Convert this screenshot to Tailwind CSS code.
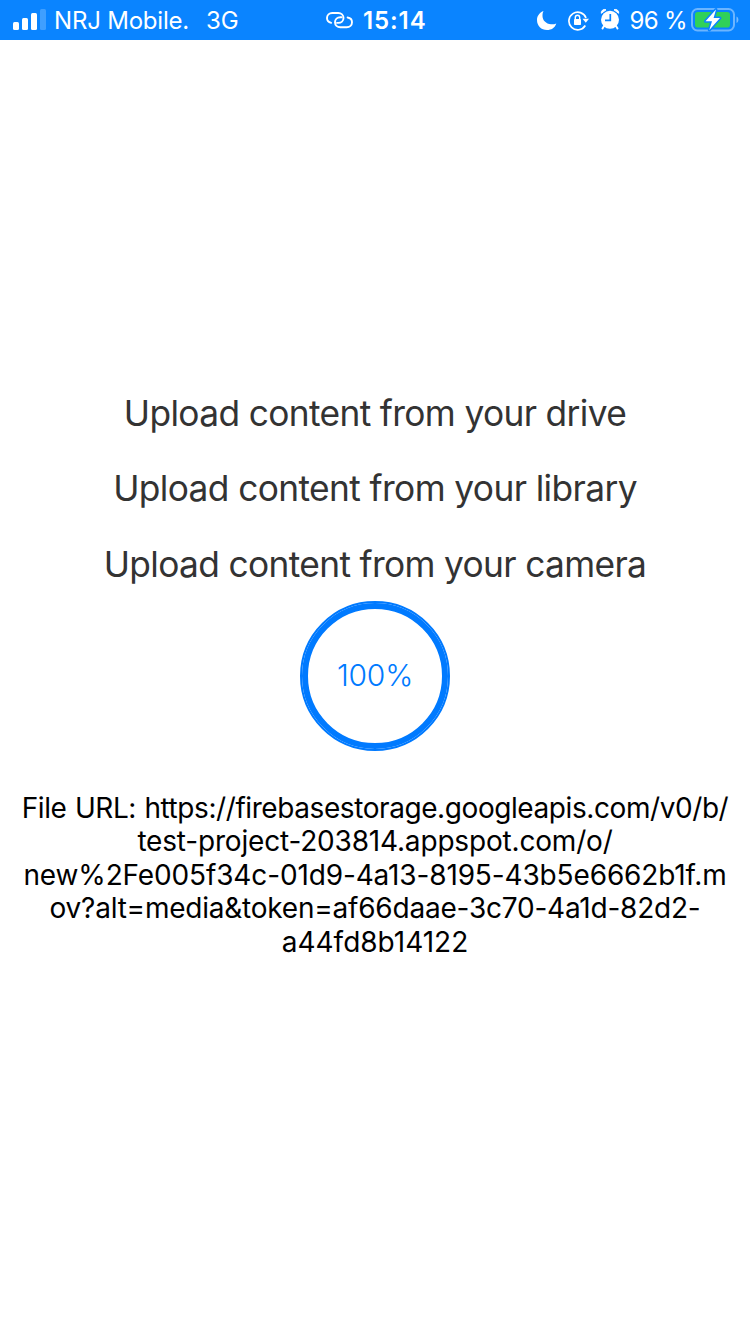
<!DOCTYPE html>
<html lang="en">
<head>
<meta charset="utf-8">
<title>Upload</title>
<script src="https://cdn.jsdelivr.net/npm/@tailwindcss/browser@4"></script>
</head>
<body class="w-[750px] h-[1334px] overflow-hidden bg-white font-['Inter','Liberation_Sans',sans-serif] flex flex-col">
<header class="h-10 shrink-0 bg-[#0a84ff] text-white text-[24px] leading-[42px] flex whitespace-nowrap">
  <div class="w-[326px] pl-[13px] flex">
    <svg class="w-[34px] h-10 shrink-0" viewBox="0 0 34 40" fill="#fff"><rect x="0" y="22" width="6" height="8" rx="1.5"/><rect x="9" y="18" width="6" height="12" rx="1.5"/><rect x="18" y="13" width="6" height="17" rx="1.5"/><rect x="27" y="9" width="6" height="21" rx="1.5" opacity=".22"/></svg>
    <span class="w-[152px] pl-[7px] tracking-[-0.2px]">NRJ Mobile.</span>
    <span class="pl-[7px]">3G</span>
  </div>
  <div class="w-[211px] flex">
    <svg class="w-[28px] h-10 shrink-0" viewBox="0 0 28 40" fill="none" stroke="#fff" stroke-width="1.9" stroke-linecap="round"><path d="M5.200 22.800C2.700 22.200 1 20.300 1 18C1 15.200 3.300 13 6.200 13H12.300C15.200 13 17.500 15.200 17.500 18C17.500 20.800 15.200 22.900 12.300 22.900H11"/><path d="M21.600 17.500C24.300 17.900 26 19.900 26 22.200C26 25 23.700 27.200 20.800 27.200H14.200C11.300 27.200 9 25 9 22.200C9 19.400 11.300 17.300 14.200 17.300H15.500"/></svg>
    <span class="pl-[9px] font-semibold tracking-[0.9px]">15:14</span>
  </div>
  <div class="flex">
    <svg class="w-[20px] h-10 shrink-0" viewBox="0 0 20 40" fill="#fff"><path d="M6.500 11C1.500 13 0 17 0 20C0 26 4.300 30 10 30C14.300 30 17.800 28 19.300 23.500C17.500 24.200 16 24.500 14 24.300C9 23.800 5.500 20.300 5.500 16C5.500 14 5.700 12.500 6.500 11Z"/></svg>
    <svg class="ml-[11px] w-[21px] h-10 shrink-0" viewBox="0 0 21 40" fill="none" stroke="#fff" stroke-width="1.700"><path d="M17.300 25.500A8.800 8.800 0 1 1 18 18"/><path d="M14.500 18.700H21L17.800 22.700Z" fill="#fff" stroke="none"/><rect x="6" y="19" width="7" height="6" rx=".8" fill="#fff" stroke="none"/><path d="M7.300 19.500V17.500A2.200 2.200 0 0 1 11.700 17.500V19.500" stroke-width="1.400"/></svg>
    <svg class="ml-[11px] w-[21px] h-10 shrink-0" viewBox="0 0 21 40"><circle cx="10" cy="19.800" r="9" fill="#fff"/><path d="M1.300 13.300A3.300 3.300 0 0 1 6 9.800ZM18.700 13.300A3.300 3.300 0 0 0 14 9.800Z" fill="#fff" stroke="#fff" stroke-width="1"/><path d="M4 26L2.500 28.500M16 26L17.500 28.500" stroke="#fff" stroke-width="2" stroke-linecap="round"/><path d="M10.300 14V20.400H5" fill="none" stroke="#0a84ff" stroke-width="1.700"/></svg>
    <span class="w-[70px] pl-[8.5px] tracking-[-0.7px]">96 %</span>
    <svg class="w-[49px] h-10 shrink-0" viewBox="0 0 49 40"><rect x="1" y="9" width="42" height="21.500" rx="5.500" fill="none" stroke="#fff" stroke-opacity=".4" stroke-width="2"/><path d="M45.500 16.500C48 17.500 48 22 45.500 23Z" fill="#fff" opacity=".45"/><rect x="4" y="12" width="35" height="15.500" rx="2.800" fill="#30d158"/><path d="M25 9.500L14.500 21.300H21L18.300 30L29 18H22.600Z" fill="#fff" stroke="#0a84ff" stroke-width="3" paint-order="stroke" stroke-linejoin="round"/></svg>
  </div>
</header>
<main class="pt-[336px] flex flex-col items-center">
  <button class="h-[75px] text-[35.3px] leading-[76px] tracking-[-0.64px] text-[#333] whitespace-nowrap">Upload content from your drive</button>
  <button class="h-[75px] text-[35.3px] leading-[76px] tracking-[-0.61px] text-[#333] whitespace-nowrap">Upload content from your library</button>
  <button class="h-[75px] text-[35.3px] leading-[78px] tracking-[-0.65px] text-[#333] whitespace-nowrap">Upload content from your camera</button>
  <div class="w-[150px] h-[150px] grid">
    <svg class="col-start-1 row-start-1 w-[150px] h-[150px]" viewBox="0 0 150 150" fill="none" stroke="#007aff"><circle cx="75" cy="75" r="74" stroke-width="2"/><circle cx="75" cy="75" r="70" stroke-width="6"/></svg>
    <span class="col-start-1 row-start-1 text-center text-[30px] leading-[149px] tracking-[-0.2px] font-light text-[#007aff]">100%</span>
  </div>
  <p class="pt-[41px] text-[28px] leading-[33.4px] text-black text-center whitespace-nowrap"><span class="tracking-[-0.42px] [word-spacing:1px]">File URL: https://firebasestorage.googleapis.com/v0/b/</span><br><span class="tracking-[-0.18px]">test-project-203814.appspot.com/o/</span><br><span class="tracking-[-0.14px]">new%2Fe005f34c-01d9-4a13-8195-43b5e6662b1f.m</span><br><span class="tracking-[-0.22px]">ov?alt=media&amp;token=af66daae-3c70-4a1d-82d2-</span><br>a44fd8b14122</p>
</main>
</body>
</html>
